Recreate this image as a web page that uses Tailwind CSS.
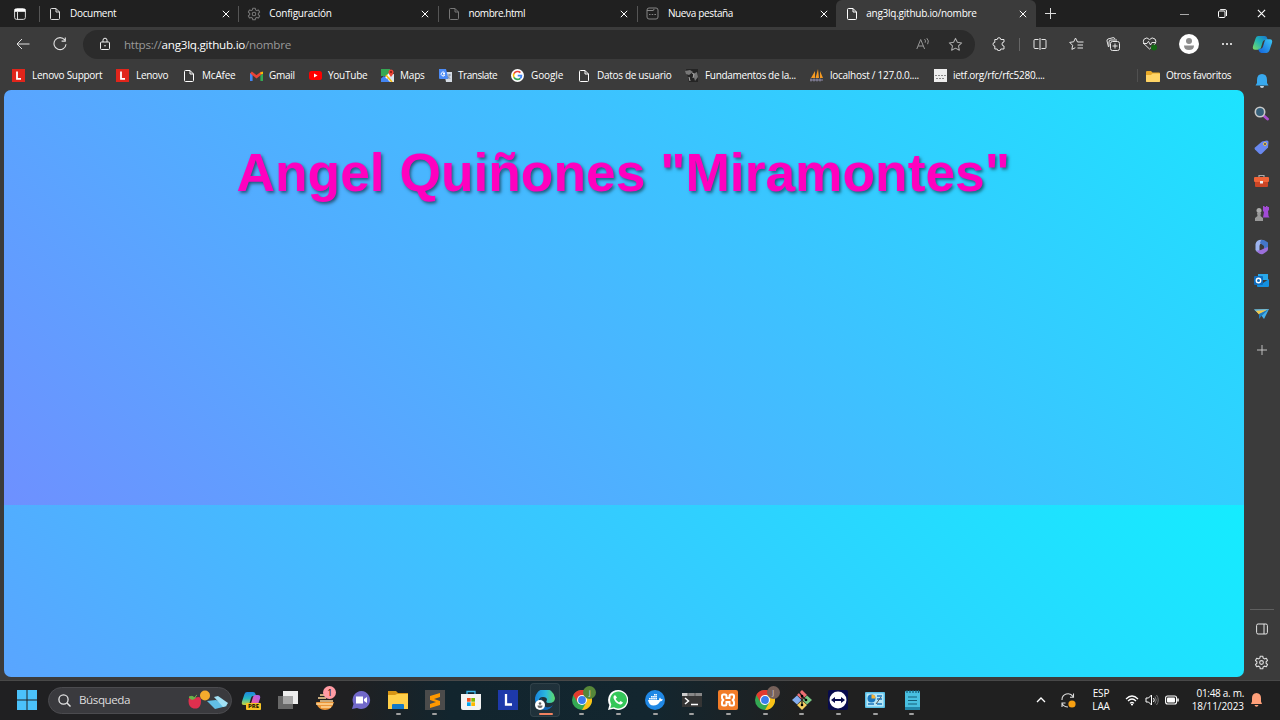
<!DOCTYPE html>
<html lang="es">
<head>
<meta charset="utf-8">
<title>ang3lq.github.io/nombre</title>
<script src="https://cdn.jsdelivr.net/npm/@tailwindcss/browser@4"></script>
</head>
<body class="w-[1280px] h-[720px] overflow-hidden bg-[#3b3b3b] font-['Open_Sans','Noto_Sans',sans-serif] text-[10px] text-white flex flex-col">
<svg class="absolute size-0">
  <symbol id="doc" viewBox="0 0 12 14"><path d="M2.500 1.500h4.500L10.500 5v6.500q0 1-1 1H2.500q-1 0-1-1v-9q0-1 1-1zM7 1.500V5h3.500" fill="none" stroke="currentColor" stroke-width="1"/></symbol>
  <symbol id="x" viewBox="0 0 8 8"><path d="M.8.8l6.400 6.400M7.200.8L.8 7.200" fill="none" stroke="currentColor" stroke-width="1"/></symbol>
  <symbol id="gear" viewBox="0 0 24 24"><path d="M10 2h4l.7 3 2 1.200 3-1 2 3.500-2.300 2.100v2.400l2.300 2.100-2 3.500-3-1-2 1.200L14 22h-4l-.7-3-2-1.200-3 1-2-3.500 2.300-2.100v-2.400L2.300 8.700l2-3.500 3 1 2-1.200z" fill="none" stroke="currentColor" stroke-width="1.800" stroke-linejoin="round"/><circle cx="12" cy="12" r="3" fill="none" stroke="currentColor" stroke-width="1.800"/></symbol>
  <symbol id="len" viewBox="0 0 13 13"><path fill="#e1251b" d="M0 0h13v13H0z"/><path d="M5 2.500v7.300h4" fill="none" stroke="#fff" stroke-width="1.800"/></symbol>
  <symbol id="star" viewBox="0 0 16 16"><path d="M8 1.500l2 4.200 4.600.6-3.400 3.200.9 4.600L8 11.900l-4.100 2.200.9-4.600L1.400 6.300 6 5.700z" fill="none" stroke="currentColor" stroke-width="1.100" stroke-linejoin="round"/></symbol>
  <symbol id="chrome" viewBox="0 0 20 20"><circle cx="10" cy="10" r="10" fill="#34a853"/><path d="M1.300 5A10 10 0 0 1 18.700 5H10L5.700 12.500z" fill="#e33b2e"/><path d="M18.700 5A10 10 0 0 1 10 20l4.300-7.500L10 5z" fill="#fbc116"/><circle cx="10" cy="10" r="5" fill="#fff"/><circle cx="10" cy="10" r="3.900" fill="#3b7ded"/></symbol>
  <linearGradient id="cg1" x1="0" y1="1" x2="1" y2="0"><stop stop-color="#7fdc62"/><stop offset=".5" stop-color="#20b5b5"/><stop offset="1" stop-color="#1673d2"/></linearGradient>
  <linearGradient id="cg2" x1="0" y1="1" x2="1" y2="0"><stop stop-color="#1261dc"/><stop offset="1" stop-color="#3cc8f4"/></linearGradient>
  <linearGradient id="cg3" x1="0" y1="0" x2="0" y2="1"><stop stop-color="#1c86e0"/><stop offset=".5" stop-color="#28b8c0"/><stop offset="1" stop-color="#c8d63c"/></linearGradient>
  <linearGradient id="cg4" x1="0" y1="1" x2="1" y2="0"><stop stop-color="#f0804f"/><stop offset=".5" stop-color="#e25bb4"/><stop offset="1" stop-color="#a75df0"/></linearGradient>
  <linearGradient id="eg" x1="0" x2="1"><stop stop-color="#1683dc"/><stop offset=".55" stop-color="#2cb9df"/><stop offset="1" stop-color="#5ddb66"/></linearGradient>
</svg>

<!-- Tab strip -->
<div class="h-[27px] shrink-0 bg-[#202020] flex items-center">
  <div class="w-[39px] flex justify-center"><svg class="size-3 ml-px" viewBox="0 0 12 12"><rect x=".6" y=".6" width="10.800" height="10.800" rx="2" fill="none" stroke="#d8d8d8" stroke-width="1"/><path d="M.6 1h10.800v2.800H.6z" fill="#fff"/><path d="M3.500 4v7.500" stroke="#d8d8d8"/></svg></div>
  <div class="w-[199.300px] flex items-center border-l border-[#555] h-4 pl-[9px] pr-2">
    <svg class="w-3 h-[14px] text-[#ddd]"><use href="#doc"/></svg><span class="ml-[9px] flex-1 tracking-[-.32px]">Document</span><svg class="size-2"><use href="#x"/></svg>
  </div>
  <div class="w-[199.300px] flex items-center border-l border-[#555] h-4 pl-2 pr-[9px]">
    <svg class="size-[14px] text-[#777]"><use href="#gear"/></svg><span class="ml-2 flex-1 tracking-[-.2px]">Configuración</span><svg class="size-2"><use href="#x"/></svg>
  </div>
  <div class="w-[199.300px] flex items-center border-l border-[#555] h-4 pl-[9px] pr-[9px]">
    <svg class="w-3 h-[14px] text-[#777]"><use href="#doc"/></svg><span class="ml-[9px] flex-1 tracking-[-.45px]">nombre.html</span><svg class="size-2"><use href="#x"/></svg>
  </div>
  <div class="w-[199.300px] flex items-center border-l border-[#555] h-4 pl-[8px] pr-2">
    <svg class="size-[13px] text-[#858585]" viewBox="0 0 13 13"><rect x="1" y="1" width="11" height="11" rx="2" fill="none" stroke="currentColor"/><path d="M1 3.500h6q1 0 1-1.500M3 7.500h1.500m1.200 0h1.500m1.200 0H10" fill="none" stroke="currentColor"/></svg><span class="ml-[9px] flex-1 tracking-[-.35px]">Nueva pestaña</span><svg class="size-2"><use href="#x"/></svg>
  </div>
  <div class="w-[200px] flex items-center h-[27px] rounded-t-md bg-[#3b3b3b] pl-[10px] pr-[9px]">
    <svg class="w-3 h-[14px]"><use href="#doc"/></svg><span class="ml-2 flex-1 tracking-[-.24px]">ang3lq.github.io/nombre</span><svg class="size-2"><use href="#x"/></svg>
  </div>
  <svg class="size-[11px] ml-[9px]" viewBox="0 0 11 11"><path d="M5.500 0v11M0 5.500h11" stroke="#ddd"/></svg>
  <div class="ml-auto flex items-center pr-[14px]">
    <svg class="w-[9px] h-2 mr-[29px]" viewBox="0 0 9 8"><path d="M0 4.500h9" stroke="#aaa"/></svg>
    <svg class="size-[9px] mr-[30px]" viewBox="0 0 9 9"><rect x=".5" y="2" width="6.500" height="6.500" rx="1" fill="none" stroke="#fff"/><path d="M2.200.6h5Q8.500.6 8.500 2v5" fill="none" stroke="#fff"/></svg>
    <svg class="size-[9px]"><use href="#x"/></svg>
  </div>
</div>

<!-- Address bar -->
<div class="h-[35px] shrink-0 flex items-center">
  <div class="w-[83px] flex items-center pl-[16px] gap-[23px] pb-px">
    <svg class="w-[14px] h-3" viewBox="0 0 14 12"><path d="M13.500 6H1m5-5L1 6l5 5" fill="none" stroke="#e2e2e2" stroke-width="1"/></svg>
    <svg class="size-[14px]" viewBox="0 0 14 14"><path d="M11.800 3A6 6 0 1 0 13 7.200M12.300.5v3.600H8.600" fill="none" stroke="#e2e2e2" stroke-width="1.100"/></svg>
  </div>
  <div class="w-[893px] h-[29px] rounded-full bg-[#2b2b2b] flex items-center pl-[16px] pr-[12px]">
    <svg class="w-3 h-[14px] -mt-px" viewBox="0 0 12 14"><rect x="1.500" y="5" width="9" height="7.500" rx="1" fill="none" stroke="#eee"/><path d="M4 5V3.200a2 2 0 0 1 4 0V5" fill="none" stroke="#eee"/><circle cx="6" cy="8.700" r=".8" fill="#eee"/></svg>
    <span class="ml-[13px] flex-1 text-[11.670px] text-[#999] tracking-[-.26px]">https://<span class="text-white">ang3lq.github.io</span>/nombre</span>
    <svg class="w-[14px] h-3 mr-[18px] -mt-0.5" viewBox="0 0 14 12"><path d="M.8 11L4.700 1.500 8.600 11M2.200 8h5M8.600 1.200q1.600 1.500.5 3.500M10.800.2q2.700 2.500.8 6" fill="none" stroke="#999"/></svg>
    <svg class="size-[15px] text-[#aaa]"><use href="#star"/></svg>
  </div>
  <div class="flex-1 flex items-center pb-px">
    <div class="w-[48px] flex justify-center"><svg class="size-[14px]" viewBox="0 0 14 14"><path d="M2.800 2.500h2.400a1.800 1.800 0 0 1 3.600 0H12V5a2 2 0 1 0 0 4v3H8.800a1.800 1.800 0 0 1-3.600 0H2.800V9a1.800 1.800 0 0 1 0-3.600z" fill="none" stroke="#e6e6e6" stroke-linejoin="round"/></svg></div>
    <div class="w-px h-[13px] bg-[#666] -ml-[4px]"></div>
    <div class="w-[39px] flex justify-center"><svg class="w-[14px] h-3" viewBox="0 0 14 12"><path d="M5.500 1.500H2q-1 0-1 1v7q0 1 1 1h3.500m3-9H12q1 0 1 1v7q0 1-1 1H8.500M7 0v12" fill="none" stroke="#e6e6e6"/></svg></div>
    <div class="w-[35px] flex justify-center"><svg class="w-[15px] h-[14px]" viewBox="0 0 15 14"><path d="M8.500 5L6.500 1 4.700 4.800l-4 .6 2.900 2.900-.7 4.100 3.400-1.700M8.500 5h6M8.500 8H14M8.500 11H14" fill="none" stroke="#e6e6e6" stroke-linejoin="round"/></svg></div>
    <div class="w-[38px] flex justify-center"><svg class="size-[14px]" viewBox="0 0 14 14"><rect x="4.500" y="4.500" width="9" height="9" rx="2" fill="none" stroke="#e6e6e6"/><path d="M2.500 10L1 4q-.3-1.500 1-2l5-1.300q1.500-.3 2 1.300M3 9.500V5q0-2 2-2h6M9 6.500v5M6.500 9h5" fill="none" stroke="#e6e6e6"/></svg></div>
    <div class="w-[36px] flex justify-center"><svg class="w-[16px] h-[14px]" viewBox="0 0 16 14"><path d="M7.500 12L2 6.800Q.5 4 2.200 2 5-.5 7.500 2.600 10-.5 13 2q1.700 2 .2 4.800zM1 6.500h4l1.500-2.200L8.500 8l1.300-2.500H14" fill="none" stroke="#e6e6e6" stroke-linejoin="round"/><circle cx="12" cy="10.500" r="3" fill="#136813"/></svg></div>
    <div class="w-[41px] flex justify-center"><svg class="size-5" viewBox="0 0 20 20"><circle cx="10" cy="10" r="10" fill="#fff"/><circle cx="10" cy="7" r="3" fill="#8c8c8c"/><path d="M5 11.500h10q0 4.500-5 4.500t-5-4.500z" fill="#8c8c8c"/></svg></div>
    <div class="w-[35px] flex justify-center"><svg class="w-3 h-1" viewBox="0 0 12 4"><path d="M1 2h2M5 2h2M9 2h2" stroke="#fff" stroke-width="1.400"/></svg></div>
    <div class="w-[36px] flex justify-center"><svg class="w-[21px] h-[19px]" viewBox="0 0 20 18"><path d="M6 1h6q2 0 2.500 2l.5 2h-3q-1.500 0-2 2l-1.500 5q-.6 2-2.500 2H3q-3 0-2-3.500L3.500 3Q4.200 1 6 1z" fill="url(#cg1)"/><path d="M14 17H9q-2 0-2.500-2L6 13h2.500q1.500 0 2-2L12 6q.6-2 2.500-2H17q3 0 2 3.500L16.500 15q-.8 2-2.500 2z" fill="url(#cg2)"/></svg></div>
  </div>
</div>

<div class="h-[618px] shrink-0 flex">
  <div class="w-[1244px] flex flex-col">
    <!-- Bookmarks -->
    <div class="h-[28px] shrink-0 flex items-center pl-3 pb-px whitespace-nowrap">
      <div class="w-[104px] flex items-center gap-[7px]"><svg class="size-[13px]"><use href="#len"/></svg><span class="tracking-[-.28px]">Lenovo Support</span></div>
      <div class="w-[67px] flex items-center gap-[7px]"><svg class="size-[13px]"><use href="#len"/></svg><span class="tracking-[-.3px]">Lenovo</span></div>
      <div class="w-[67px] flex items-center gap-[7px]"><svg class="w-3 h-[14px]"><use href="#doc"/></svg><span class="tracking-[-.2px]">McAfee</span></div>
      <div class="w-[59px] flex items-center gap-[6px]"><svg class="w-[13px] h-[10px]" viewBox="0 0 13 10"><path d="M1.300 10V2" stroke="#4285f4" stroke-width="2.600"/><path d="M11.700 10V2" stroke="#34a853" stroke-width="2.600"/><path d="M1 1.500l5.500 4.300L12 1.500" fill="none" stroke="#ea4335" stroke-width="2.700"/><path d="M10.400 3V1.500L13 .5V3z" fill="#fbbc04"/></svg><span class="tracking-[-.3px]">Gmail</span></div>
      <div class="w-[72px] flex items-center gap-[6px]"><svg class="w-[13px] h-[9px]" viewBox="0 0 13 9"><rect width="13" height="9" rx="2.500" fill="#f00"/><path d="M5 2.500v4l3.500-2z" fill="#fff"/></svg><span class="tracking-[-.25px]">YouTube</span></div>
      <div class="w-[58px] flex items-center gap-[6px]"><svg class="size-[13px]" viewBox="0 0 13 13"><path fill="#34a853" d="M0 0h9v7H0z"/><path fill="#dce5ef" d="M7 6l6-1v8H6z"/><path d="M0 12L11 1v4l-8 8z" fill="#fff"/><path d="M0 13V9.500L3 7l6 6z" fill="#4285f4"/><path d="M5 6l6 7" stroke="#fbbc04" stroke-width="1.500"/><path d="M10 8Q7 4 7.500 2.500a2.600 2.600 0 0 1 5 0Q13 4 10 8z" fill="#ea4335"/><circle cx="10" cy="3" r="1" fill="#811411"/></svg><span class="tracking-[-.2px]">Maps</span></div>
      <div class="w-[72px] flex items-center gap-[6px]"><svg class="size-[13px]" viewBox="0 0 13 13"><path fill="#d5dce5" d="M5 3h8v10H7z"/><path fill="#4c8bf5" d="M0 0h7l2.500 10H1q-1 0-1-1z"/><path d="M6 4.500H4m1.500-1a2 2 0 1 0 .4 2.500H4" fill="none" stroke="#fff"/><path d="M8.500 6H12M10.300 5v1q0 3-2 4m0-3 3 3" stroke="#7a8797" fill="none" stroke-width=".8"/></svg><span class="tracking-[-.45px]">Translate</span></div>
      <div class="w-[67px] flex items-center gap-[7px]"><svg class="size-[13px]" viewBox="0 0 13 13"><circle cx="6.500" cy="6.500" r="6.500" fill="#fff"/><g fill="none" stroke-width="1.700"><path d="M9.400 3.700A4 4 0 0 0 3 4.600" stroke="#ea4335"/><path d="M3 4.500a4 4 0 0 0 0 4" stroke="#fbbc05"/><path d="M3 8.400a4 4 0 0 0 6.300.9" stroke="#34a853"/><path d="M9.200 9.400q1.200-1 1.200-2.700H6.700" stroke="#4285f4"/></g></svg><span class="tracking-[-.1px]">Google</span></div>
      <div class="w-[107px] flex items-center gap-[7px]"><svg class="w-3 h-[14px]"><use href="#doc"/></svg><span class="tracking-[-.31px]">Datos de usuario</span></div>
      <div class="w-[125px] flex items-center gap-[6px]"><svg class="w-[14px] h-[13px]" viewBox="0 0 14 13"><path fill="#242424" d="M1 0h12v13H4z"/><path d="M0 2l5-1 3 2-4 3-3-1zM8 5l4-2 1 5-3 4z" fill="#777"/><path d="M7 4l2 1-1 4M4 8l1 4" stroke="#aaa" fill="none"/></svg><span class="tracking-[-.33px]">Fundamentos de la...</span></div>
      <div class="w-[124px] flex items-center gap-[6px]"><svg class="w-[14px] h-[13px]" viewBox="0 0 14 13"><path d="M1 9l4-7v7zM5.500 9L8 0l1 9zM10 9l0-7 3 7z" fill="#f59a22"/><path d="M0 11h13M1 9.500v3m3-3v3m3-3v3m3-3v3" stroke="#8d8aa8"/></svg><span class="tracking-[-.27px]">localhost / 127.0.0....</span></div>
      <div class="flex-1 flex items-center gap-[6px]"><svg class="size-[13px]" viewBox="0 0 13 13"><path fill="#eee" d="M0 0h13v13H0z"/><path d="M1 6.500h11M2 9.500h2m1 0h2m1 0h2" stroke="#888" stroke-dasharray="2 1"/></svg><span class="tracking-[-.28px]">ietf.org/rfc/rfc5280....</span></div>
      <div class="w-[107px] flex items-center border-l border-[#505050] pl-[8px] gap-[6px] h-[13px]"><svg class="w-[14px] h-3" viewBox="0 0 14 12"><path d="M0 2Q0 1 1 1h4l1.500 1.500H13q1 0 1 1V11q0 1-1 1H1q-1 0-1-1z" fill="#e8a928"/><path d="M0 5h5l1.500-1.500H14V11q0 1-1 1H1q-1 0-1-1z" fill="#ffd466"/></svg><span class="tracking-[-.29px]">Otros favoritos</span></div>
    </div>
    <!-- Page -->
    <main class="ml-1 h-[587px] w-[1239.500px] shrink-0 rounded-[7px] bg-[linear-gradient(45deg,#6e90ff,#14ecff)] bg-[length:100%_587px] bg-[position:0_-172px] pt-[53px]">
      <h1 class="font-['Liberation_Sans',Arial,sans-serif] font-bold text-[53.330px] leading-[60px] text-center text-[#ff00bf] pr-px [text-shadow:1.700px_1.700px_3.300px_rgba(0,0,0,.5)]">Angel Quiñones "Miramontes"</h1>
    </main>
  </div>
  <!-- Sidebar -->
  <aside class="flex-1 flex flex-col items-center pt-[11px] pr-px">
    <svg class="w-[14px] h-4 shrink-0" viewBox="0 0 14 16"><path d="M7 1q5 0 5 6v3l1.500 2.500H.5L2 10V7q0-6 5-6z" fill="#38a9ee"/><path d="M5 13h4q0 2-2 2t-2-2z" fill="#c5d3dd"/></svg>
    <svg class="size-[15px] mt-[17px] shrink-0" viewBox="0 0 15 15"><path d="M9.500 9.500l4 3.500" stroke="#ac4fd0" stroke-width="2.800" stroke-linecap="round"/><circle cx="6" cy="6" r="4.700" fill="#36607a" stroke="#c8c8c8" stroke-width="1.600"/></svg>
    <svg class="size-[15px] mt-[19px] shrink-0" viewBox="0 0 15 15"><path d="M8 1.500l5-1q1.500 0 1.500 1.500L14 7.500l-6 6q-1.500 1.500-3 0L1 9.500q-1-1 0-2z" fill="#6988ef"/><circle cx="11" cy="4" r="1.500" fill="#354168" stroke="#f1c84c"/></svg>
    <svg class="w-[15px] h-[14px] mt-[19px] shrink-0" viewBox="0 0 15 14"><path d="M5 4V1.500h5V4" fill="none" stroke="#aaa" stroke-width="1.200"/><rect y="3" width="15" height="5" rx="1" fill="#f16337"/><path d="M1 8h13v4q0 1-1 1H2q-1 0-1-1z" fill="#cb4526"/><path d="M6 7h3v2.500H6z" fill="#eee"/></svg>
    <svg class="w-4 h-[15px] mt-[18px] shrink-0" viewBox="0 0 16 15"><circle cx="5" cy="4.500" r="2.500" fill="#aaa"/><path d="M3 7h4l-.5 3 2.500 2v3H1v-3l2.500-2z" fill="#999"/><path d="M9 0h1.500v1H12V0h1.500v1H15v3l-1 1 .5 5 1 1.500H9L10 6 9 5z" fill="#a24bd6"/></svg>
    <svg class="size-[16px] mt-[18px] shrink-0" viewBox="0 0 16 16"><path d="M9 1Q3 0 1.500 5v6q1 2.500 4 3V7q0-2 2-3l3-1z" fill="#9db4ef"/><path d="M7 1h3l4 2.500V10q-1 2-4 1V7L6 4z" fill="#4376c9"/><path d="M2 11q3 1.500 8-1.500L14 8v2q0 2-2 3l-3 2q-2 .8-4-.5z" fill="#9b6fdb"/></svg>
    <svg class="size-[15px] mt-[18px] shrink-0" viewBox="0 0 15 15"><path d="M4 1h10v6H4z" fill="#28a8ea"/><path d="M3 6l6 4 6-4v7q0 1-1 1H4q-1 0-1-1z" fill="#1490df"/><rect y="3" width="9" height="9" rx="1" fill="#0f6cbd"/><circle cx="4.500" cy="7.500" r="2.200" fill="none" stroke="#fff" stroke-width="1.400"/></svg>
    <svg class="w-[15px] h-3 mt-[20px] shrink-0" viewBox="0 0 15 12"><path d="M0 1.500L15 1l-5 10-3-4z" fill="#46afe9"/><path d="M0 1.500L15 1 5 6z" fill="#7bb9c8"/><path d="M2 3L13 2 5 6.500z" fill="#f2c84a"/><path d="M15 1L5 6v5l2.500-3z" fill="#217bbd"/></svg>
    <svg class="size-[10px] mt-[25px] shrink-0" viewBox="0 0 11 11"><path d="M5.500 0v11M0 5.500h11" stroke="#ccc"/></svg>
    <div class="mt-auto w-6 h-px bg-[#606060]"></div>
    <svg class="w-3 h-3 mt-[13px] shrink-0" viewBox="0 0 12 12"><rect x=".6" y="1" width="10.800" height="10" rx="1.500" fill="none" stroke="#e5e5e5"/><path d="M8 1v10" stroke="#e5e5e5"/></svg>
    <svg class="size-[15px] mt-[20px] mb-[10px] text-[#ddd] shrink-0"><use href="#gear"/></svg>
  </aside>
</div>

<!-- Taskbar -->
<footer class="h-10 shrink-0 border-t border-[#484848] flex items-center pb-px bg-[linear-gradient(90deg,#202022_0,#202022_350px,#12252e_450px,#13262f_650px,#202020_800px,#202020_100%)]">
  <svg class="size-5 ml-[17px]" viewBox="0 0 20 20"><path d="M0 0h9.500v9.500H0zM10.500 0H20v9.500h-9.500zM0 10.500h9.500V20H0zM10.500 10.500H20V20h-9.500z" fill="#4bc2fb"/></svg>
  <div class="ml-[11px] w-[184px] h-[27px] rounded-full border border-[#4b4b4f] bg-[#3a3a3e] flex items-center pl-[9px] pr-[2px]">
    <svg class="size-[13px]" viewBox="0 0 13 13"><circle cx="5.500" cy="5.500" r="4.600" fill="none" stroke="#e6e6e6" stroke-width="1.300"/><path d="M9 9l3.500 3.500" stroke="#e6e6e6" stroke-width="1.400"/></svg>
    <span class="ml-2 flex-1 text-[11.670px] text-[#ddd] tracking-[-.45px]">Búsqueda</span>
    <svg class="w-[42px] h-5" viewBox="0 0 42 20"><path d="M8 8q6-3 6 3t-4 7.500H6.500Q1.500 17 1.500 11T8 8z" fill="#df2f4e"/><path d="M8 8Q5 5 2 7l2 2q2 1 4-1zM8 8q0-2 2-3" fill="#69b34a" stroke="#69b34a"/><circle cx="18" cy="5.500" r="5" fill="#f5ab2d"/><path d="M20 11l9-1 11 6-12 3z" fill="#62bfe5"/><path d="M27 7l4-1 10 7-2 3-3 1z" fill="#a2e1f5"/></svg>
  </div>
  <div class="flex h-full items-center text-center ml-px">
    <div class="w-[36.700px] flex justify-center relative"><svg class="w-5 h-[18px]" viewBox="0 0 20 18"><path d="M6 1h6q2 0 2.500 2l.5 2h-3q-1.500 0-2 2l-1.500 5q-.6 2-2.500 2H3q-3 0-2-3.500L3.500 3Q4.200 1 6 1z" fill="url(#cg3)"/><path d="M14 17H9q-2 0-2.500-2L6 13h2.500q1.500 0 2-2L12 6q.6-2 2.500-2H17q3 0 2 3.500L16.500 15q-.8 2-2.500 2z" fill="url(#cg4)"/></svg><span class="absolute left-[13px] top-[12px] w-[15px] h-[7px] rounded-[1px] bg-[#f6c425] text-black font-bold text-[6px] leading-[7px]">PRE</span></div>
    <div class="w-[36.700px] flex justify-center"><svg class="size-5" viewBox="0 0 20 20"><path d="M0 6h15v13H0z" fill="#686868"/><path d="M5 1h15v13H5z" fill="#eee"/><path d="M5 6h10v8H5z" fill="#a7a7a7"/></svg></div>
    <div class="w-[36.700px] flex justify-center relative"><svg class="size-5" viewBox="0 0 20 20"><path d="M1 12h18q-2 8-9 8t-9-8z" fill="#eb9638"/><path d="M5 5h6M3 8h8M5 11h13M1 14h17M6 17h10" stroke="#ffd89a" stroke-width="1.300"/></svg><span class="absolute left-[17px] -top-[4px] size-[13px] rounded-full bg-[#ff9ba4] text-black text-[9px] leading-[13px]">1</span></div>
    <div class="w-[36.700px] flex justify-center"><svg class="size-5" viewBox="0 0 20 20"><path d="M10.500 1A9 9 0 1 1 6 18l-5 1 1.500-5A9 9 0 0 1 10.500 1z" fill="#7168c9"/><path d="M5 6.500h7v7H5zM13 9l3-2v6l-3-2z" fill="#fff"/></svg></div>
    <div class="w-[36.700px] flex justify-center relative"><svg class="size-5" viewBox="0 0 20 20"><path d="M0 1h8l2 2h10v8H0z" fill="#d79514"/><path d="M0 5h7l2-1h11v15H0z" fill="#ffcf49"/><path d="M4 19v-4q0-1 1-1h10q1 0 1 1v4z" fill="#1479c8"/></svg><i class="absolute left-[16px] top-[23px] w-[5px] h-[2px] rounded bg-[#a0a0a0]"></i></div>
    <div class="w-[36.700px] flex justify-center relative"><svg class="size-5" viewBox="0 0 20 20"><path fill="#4b4b4b" d="M0 0h20v20H0z"/><path d="M15 3v4L9 9l6 2v4l-10 3v-4l6-2-6-2V6z" fill="#ff9800"/></svg><i class="absolute left-[16px] top-[23px] w-[5px] h-[2px] rounded bg-[#a0a0a0]"></i></div>
    <div class="w-[36.700px] flex justify-center"><svg class="size-5" viewBox="0 0 20 20"><path d="M6 5V1.500h8V5" fill="none" stroke="#3eb6e9" stroke-width="1.300"/><path d="M0 4h20v14q0 2-2 2H2q-2 0-2-2z" fill="#f3f3f3"/><path d="M6 8h3.700v3.700H6z" fill="#f25022"/><path d="M10.300 8H14v3.700h-3.700z" fill="#7fba00"/><path d="M6 12.300h3.700V16H6z" fill="#00a4ef"/><path d="M10.300 12.300H14V16h-3.700z" fill="#ffb900"/></svg></div>
    <div class="w-[36.700px] flex justify-center"><svg class="size-5" viewBox="0 0 20 20"><path fill="#1d39aa" d="M0 0h20v20H0z"/><path d="M8 4v10.500h6" fill="none" stroke="#fff" stroke-width="2.300"/></svg></div>
    <div class="w-[36.700px] h-[34px] flex justify-center items-center relative"><div class="absolute inset-x-[3px] inset-y-0 rounded bg-white/6 border border-white/8"></div><svg class="size-5 relative" viewBox="0 0 20 20"><path d="M0 10A10 10 0 0 1 20 8q0 5-6 5-4 0-2-3 0-3-4-3-5 0-4 6 1 4 5 7-8-1-9-10z" fill="url(#eg)"/><path d="M7 8q-4 7 4 9 4 1 7-2-3 5-8 5-7-1-6-7 1-4 3-5z" fill="#1267b7"/><circle cx="5" cy="15" r="5" fill="#fff"/><circle cx="5" cy="13.500" r="1.300" fill="#666"/><path d="M2.500 15.500h5q0 2.500-2.500 2.500t-2.500-2.500z" fill="#666"/></svg><i class="absolute left-[12px] top-[30px] w-[14px] h-[2px] rounded bg-[#f28260]"></i></div>
    <div class="w-[36.700px] flex justify-center relative"><svg class="size-5"><use href="#chrome"/></svg><span class="absolute left-[20px] -top-[4px] size-[13px] rounded-full bg-[#568739] text-[#ddd] text-[8px] leading-[12px]">j</span><i class="absolute left-[16px] top-[23px] w-[5px] h-[2px] rounded bg-[#a0a0a0]"></i></div>
    <div class="w-[36.700px] flex justify-center relative"><svg class="size-5" viewBox="0 0 20 20"><path d="M10 0a10 10 0 1 1-4.500 18.800L0 20l1.400-5A10 10 0 0 1 10 0z" fill="#fff"/><path d="M10 1.500a8.500 8.500 0 1 1-4 15.700L2.300 18l1-3.600A8.500 8.500 0 0 1 10 1.500z" fill="#35c759"/><path d="M7 5q-2 1-1.500 3 1.500 5 6.500 6.500 2 .4 3-2l-2.500-1.500-1.500 1.400Q8.500 11 7.600 9L9 7.500z" fill="#fff"/></svg><i class="absolute left-[16px] top-[23px] w-[5px] h-[2px] rounded bg-[#a0a0a0]"></i></div>
    <div class="w-[36.700px] flex justify-center relative"><svg class="size-5" viewBox="0 0 20 20"><circle cx="10" cy="10" r="10" fill="#2088e5"/><path d="M3 10h11q0-2 1-2.500L16 9l2 .5q-1 2-3 2-2 4-6.500 4T3 10z" fill="#fff"/><path d="M4 8.800h8M6 6.800h6M9 4.800h3" stroke="#fff" stroke-width="1.600" stroke-dasharray="1.700 .4"/></svg><i class="absolute left-[16px] top-[23px] w-[5px] h-[2px] rounded bg-[#a0a0a0]"></i></div>
    <div class="w-[36.700px] flex justify-center relative"><svg class="size-5" viewBox="0 0 20 20"><path fill="#353535" d="M0 3h20v14H0z"/><path d="M0 3h20v3H0z" fill="#888"/><path d="M0 3h6v3H0z" fill="#ccc"/><path d="M6 3v3m7-3v3" stroke="#555"/><path d="M3 8l3.500 3L3 14M9 14.500h7" fill="none" stroke="#fff" stroke-width="1.500"/></svg><i class="absolute left-[16px] top-[23px] w-[5px] h-[2px] rounded bg-[#a0a0a0]"></i></div>
    <div class="w-[36.700px] flex justify-center relative"><svg class="size-5" viewBox="0 0 20 20"><rect width="20" height="20" rx="2" fill="#f17c28"/><path d="M7 4.500h-1.500Q4 4.500 4 6v1.500q0 2 2 2.500-2 .5-2 2.500V14q0 1.500 1.500 1.500H7q1.500 0 1.500-1.500v-2h3v2q0 1.500 1.500 1.500h1.500Q16 15.500 16 14v-1.500q0-2-2-2.500 2-.5 2-2.500V6q0-1.500-1.500-1.500H13q-1.500 0-1.500 1.500v2h-3V6Q8.500 4.500 7 4.500z" fill="none" stroke="#fff" stroke-width="2"/></svg><i class="absolute left-[16px] top-[23px] w-[5px] h-[2px] rounded bg-[#a0a0a0]"></i></div>
    <div class="w-[36.700px] flex justify-center relative"><svg class="size-5"><use href="#chrome"/></svg><span class="absolute left-[20px] -top-[4px] size-[13px] rounded-full bg-[#76615a] text-[#ddd] text-[7px] leading-[13px]">J</span><i class="absolute left-[16px] top-[23px] w-[5px] h-[2px] rounded bg-[#a0a0a0]"></i></div>
    <div class="w-[36.700px] flex justify-center relative"><svg class="size-5" viewBox="0 0 20 20"><path d="M10 0l5 5-5 4.500L5 5z" fill="#ee6e72"/><path d="M5 5.500l4.500 4.500L5 14.500 0 10z" fill="#85aef0"/><path d="M15 5.500l5 4.500-5 4.500-4.500-4.500z" fill="#78c883"/><path d="M10 10.500l5 4.500-5 5-5-5z" fill="#f4cf63"/><path d="M7 2l3 4v9M10 6l4 4" fill="none" stroke="#242424" stroke-width="1.300"/><circle cx="10" cy="6" r="1.300"/><circle cx="10" cy="15" r="1.300"/><circle cx="14" cy="10" r="1.300"/></svg><i class="absolute left-[16px] top-[23px] w-[5px] h-[2px] rounded bg-[#a0a0a0]"></i></div>
    <div class="w-[36.700px] flex justify-center relative"><svg class="size-5" viewBox="0 0 20 20"><rect width="20" height="20" rx="2" fill="#080b4d"/><circle cx="10" cy="10" r="8.500" fill="#fff"/><path d="M3 10l4-3v2h6V7l4 3-4 3v-2H7v2z" fill="#080b4d"/></svg><i class="absolute left-[16px] top-[23px] w-[5px] h-[2px] rounded bg-[#a0a0a0]"></i></div>
    <div class="w-[36.700px] flex justify-center relative"><svg class="size-5" viewBox="0 0 20 20"><rect y="2" width="20" height="16" rx="1" fill="#5ac1e9"/><path fill="#b7e7f7" d="M1.500 3.500h17v13h-17z"/><circle cx="6.500" cy="8.500" r="4" fill="#1b77bd"/><path d="M6.500 8.500v-4a4 4 0 0 1 4 4z" fill="#f8b334"/><path d="M12 6h5M12 9h5M3 14h6m3 0h5" stroke="#1b77bd" stroke-width="1.300"/><path d="M11 14l5-7" stroke="#555"/></svg><i class="absolute left-[16px] top-[23px] w-[5px] h-[2px] rounded bg-[#a0a0a0]"></i></div>
    <div class="w-[36.700px] flex justify-center relative"><svg class="size-5" viewBox="0 0 20 20"><rect x="3" y="1" width="15" height="19" rx="1" fill="#48bfe0"/><path d="M3 17h15v3H3z" fill="#2385a8"/><path d="M5 0v3m3-3v3m3-3v3m3-3v3m2.500-3v3M6 7h9M6 10.500h9M6 14h9" stroke="#155e79" stroke-width="1.200"/></svg><i class="absolute left-[16px] top-[23px] w-[5px] h-[2px] rounded bg-[#a0a0a0]"></i></div>
  </div>
  <div class="ml-auto flex items-center pr-[18px] leading-[13px]">
    <svg class="w-[10px] h-[6px] mr-[15px]" viewBox="0 0 10 6"><path d="M1 5l4-4 4 4" fill="none" stroke="#fff" stroke-width="1.300"/></svg>
    <svg class="size-[15px] mr-[15px]" viewBox="0 0 15 15"><path d="M1 7A6 6 0 0 1 12 3.500M12.500.5v3.800H9M1 10.500q2 3.500 6 3.500M1 14v-4h3.500" fill="none" stroke="#ddd" stroke-width="1.100"/><circle cx="11" cy="11" r="3.600" fill="#f8a011"/></svg>
    <div class="w-5 text-center tracking-[-.2px]">ESP<br>LAA</div>
    <svg class="w-[14px] h-3 ml-[14px]" viewBox="0 0 14 12"><path d="M1 5Q7-1 13 5M3 7q4-4 8 0M5 9.300q2-2 4 0" fill="none" stroke="#fff" stroke-width="1.200"/><circle cx="7" cy="10.500" r="1.100" fill="#fff"/></svg>
    <svg class="w-[14px] h-3 ml-[6px]" viewBox="0 0 14 12"><path d="M1 4h2.500L6.500 1v10l-3-3H1zM8.500 4q1.500 2 0 4" fill="none" stroke="#fff" stroke-linejoin="round"/><path d="M10 2.500q2.500 3.500 0 7M11.500 1q3.500 5 0 10" fill="none" stroke="#777"/></svg>
    <svg class="w-[14px] h-[10px] ml-[6px]" viewBox="0 0 14 10"><rect x=".6" y="1" width="11" height="8" rx="2" fill="none" stroke="#fff" stroke-width="1.100"/><rect x="2" y="2.500" width="8" height="5" rx="1" fill="#fff"/><path d="M13 3.500v3" stroke="#fff" stroke-width="1.500"/></svg>
    <div class="w-[65px] text-right whitespace-nowrap"><span class="tracking-[-.3px]">01:48 a. m.</span><br><span class="tracking-[-.08px]">18/11/2023</span></div>
    <svg class="w-[11px] h-[14px] ml-[7px]" viewBox="0 0 11 14"><path d="M5.500 0Q10 .5 10 5v3.500l1 2.500H0l1-2.500V5Q1 .5 5.500 0zM3.500 12h4q-.5 1.700-2 1.700t-2-1.700z" fill="#ffa07a"/></svg>
  </div>
</footer>
</body>
</html>
